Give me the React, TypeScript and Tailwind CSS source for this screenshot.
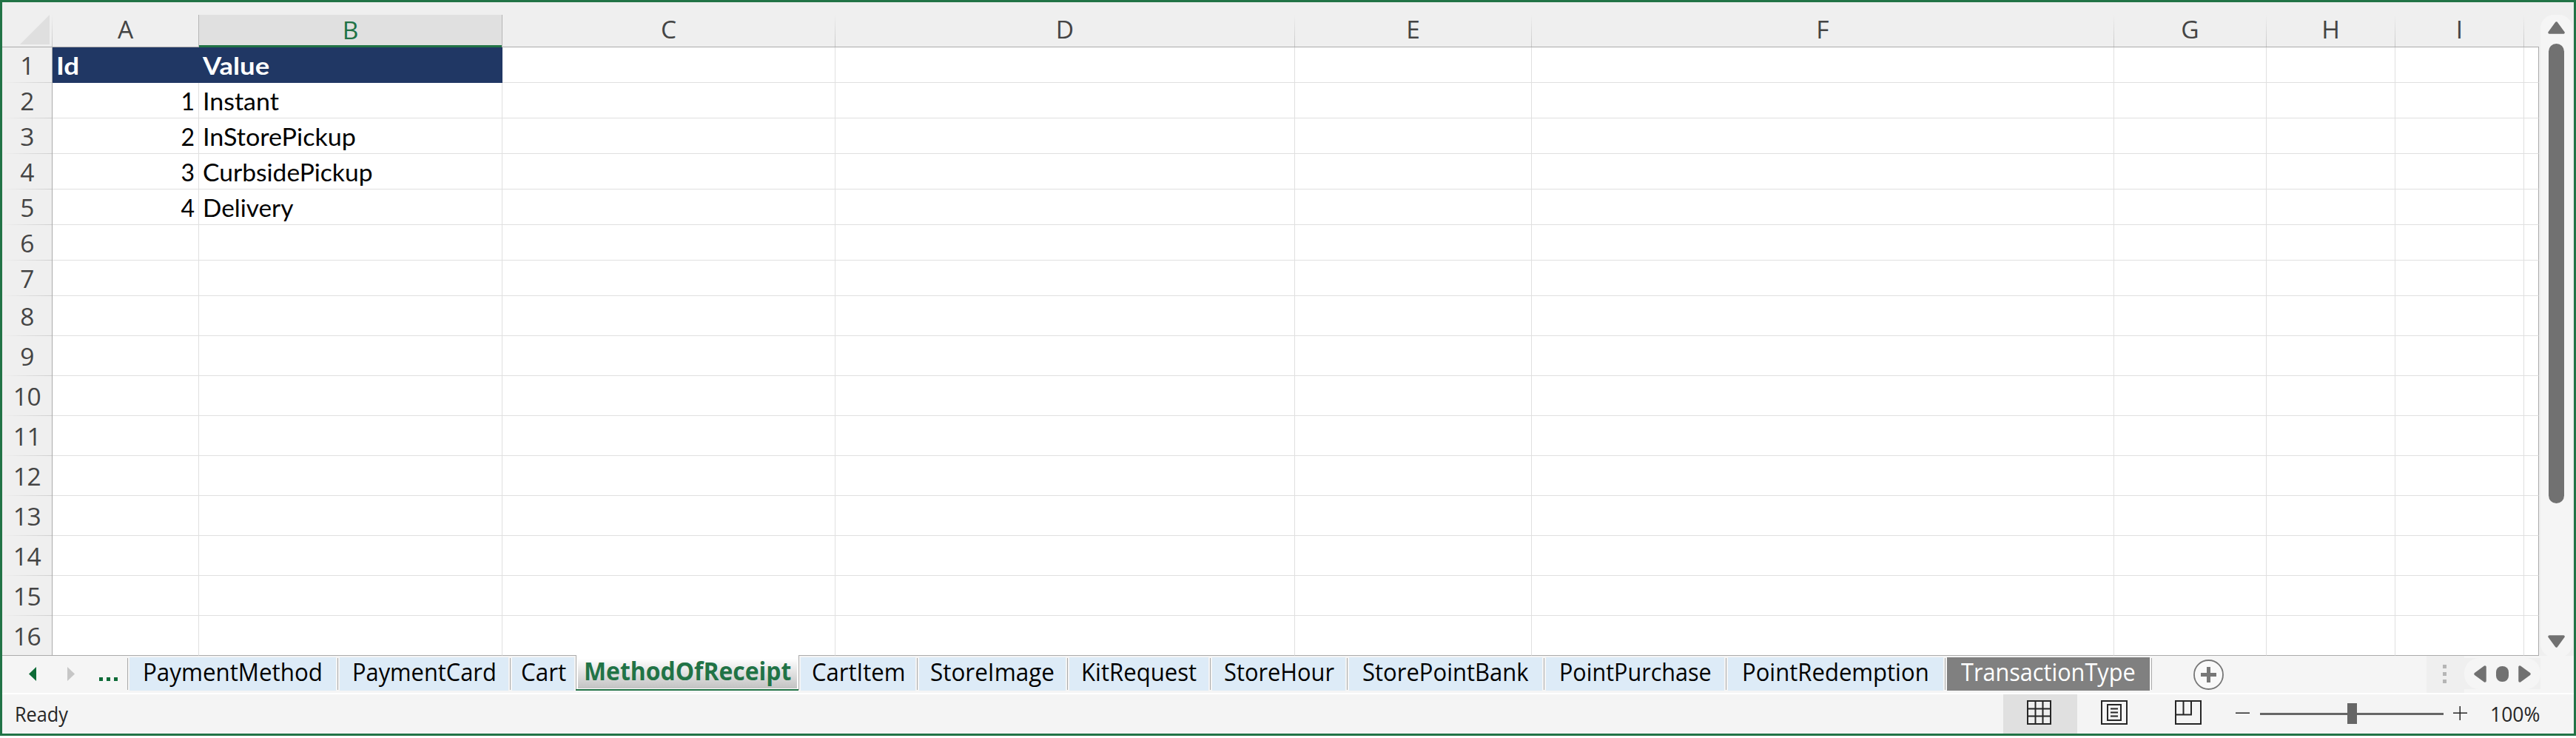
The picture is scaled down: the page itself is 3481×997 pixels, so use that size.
import { useLayoutEffect, useRef, useState } from "react";

/** Text squeezed or stretched horizontally to an exact advance width. */
function Fit({ text, width, className = "" }: { text: string; width: number; className?: string }) {
  const ref = useRef<HTMLSpanElement>(null);
  const [scale, setScale] = useState(1);
  useLayoutEffect(() => {
    if (ref.current) setScale(width / ref.current.offsetWidth);
  }, [text, width]);
  return (
    <span className="block shrink-0" style={{ width }}>
      <span
        ref={ref}
        className={`inline-block origin-left whitespace-nowrap ${className}`}
        style={{ transform: `scaleX(${scale})` }}
      >
        {text}
      </span>
    </span>
  );
}

const columns = [
  { name: "A", width: 198 },
  { name: "B", width: 410 },
  { name: "C", width: 450 },
  { name: "D", width: 621 },
  { name: "E", width: 320 },
  { name: "F", width: 787 },
  { name: "G", width: 206 },
  { name: "H", width: 174 },
  { name: "I", width: 174 },
];

const data: Record<number, { id: string; value: string; width: number }> = {
  2: { id: "1", value: "Instant", width: 103 },
  3: { id: "2", value: "InStorePickup", width: 207 },
  4: { id: "3", value: "CurbsidePickup", width: 230 },
  5: { id: "4", value: "Delivery", width: 122 },
};

const tabs = [
  { name: "PaymentMethod", width: 284, text: 243 },
  { name: "PaymentCard", width: 233, text: 195 },
  { name: "Cart", width: 89, text: 61 },
  { name: "MethodOfReceipt", width: 301, text: 280, active: true },
  { name: "CartItem", width: 160, text: 126 },
  { name: "StoreImage", width: 203, text: 168 },
  { name: "KitRequest", width: 193, text: 156 },
  { name: "StoreHour", width: 185, text: 149 },
  { name: "StorePointBank", width: 266, text: 225 },
  { name: "PointPurchase", width: 246, text: 206 },
  { name: "PointRedemption", width: 296, text: 253 },
  { name: "TransactionType", width: 279, text: 236, dark: true },
];

function ColumnHeaders() {
  return (
    <div className="flex h-[61px] w-full border-b border-[#ababab] bg-[#efefef] pt-[17px]">
      <div className="flex w-[68px] shrink-0">
        <svg className="h-[43px] w-[68px]" viewBox="0 0 68 43">
          <path d="M64 0V40H24Z" fill="#dfdfdf" />
          <rect x="67" y="0" width="1" height="43" fill="url(#fade)" />
          <defs>
            <linearGradient id="fade" x1="0" y1="0" x2="0" y2="1">
              <stop offset="0" stopColor="#efefef" />
              <stop offset="1" stopColor="#c6c6c6" />
            </linearGradient>
          </defs>
        </svg>
      </div>
      {columns.map((c) => {
        const selected = c.name === "B";
        return (
          <div key={c.name} className="flex h-[43px] shrink-0" style={{ width: c.width }}>
            <div
              className={
                selected
                  ? "-mb-px flex h-[44px] flex-1 items-center justify-center border-b-[3px] border-[#217346] bg-[#e0e0e0] pb-[2px] text-[#217346]"
                  : "flex flex-1 items-center justify-center pb-[5px] text-[#444444]"
              }
            >
              <span className="text-[33.5px] leading-[40px]">{c.name}</span>
            </div>
            <div
              className={
                selected || c.name === "A"
                  ? "w-px bg-[#b5b5b5]"
                  : "w-px bg-linear-to-b from-[#efefef] to-[#c6c6c6]"
              }
            />
          </div>
        );
      })}
    </div>
  );
}

function Row({ n }: { n: number }) {
  const tall = n >= 8;
  const header = n === 1;
  const last = n === 16;
  const item = data[n];
  const line = last ? "border-b-[#ababab]" : "border-b-[#e0e0e0]";
  return (
    <div className={`flex w-full shrink-0 ${tall ? "h-[54px]" : "h-[48px]"}`}>
      <div className="flex w-[68px] shrink-0 flex-col border-r border-[#ababab] bg-[#efefef]">
        <div className="flex flex-1 items-center justify-center font-['Open_Sans',sans-serif] text-[#444444]">
          <span className="text-[33.5px] leading-[40px] tracking-[-0.5px]">{n}</span>
        </div>
        <div
          className={last ? "h-px bg-[#ababab]" : "h-px bg-linear-to-r from-[#efefef] to-[#cfcfcf]"}
        />
      </div>
      {columns.map((c) => {
        const filled = header && (c.name === "A" || c.name === "B");
        return (
          <div
            key={c.name}
            className={
              filled
                ? "flex shrink-0 items-center bg-[#203764] pt-[2px] pl-[5px] text-white"
                : `flex shrink-0 items-center border-r border-b border-r-[#e0e0e0] pt-[2px] pl-[5px] text-black ${line}`
            }
            style={{ width: c.width }}
          >
            {header && c.name === "A" && (
              <Fit text="Id" width={31} className="text-[32px] leading-[40px] font-bold" />
            )}
            {header && c.name === "B" && (
              <Fit text="Value" width={90} className="text-[32px] leading-[40px] font-bold" />
            )}
            {item && c.name === "A" && (
              <span className="flex-1 pr-[5px] text-right text-[32px] leading-[40px]">{item.id}</span>
            )}
            {item && c.name === "B" && (
              <Fit text={item.value} width={item.width} className="text-[32px] leading-[40px]" />
            )}
          </div>
        );
      })}
      <div className={`w-[20px] shrink-0 border-r border-b border-r-[#ababab] ${line}`} />
    </div>
  );
}

function VerticalScroll() {
  return (
    <div className="flex h-[885px] w-[47px] shrink-0 flex-col bg-[#efefef] pt-[17px] pl-[2px]">
      <div className="flex h-[868px] w-[43px] flex-col items-center rounded-[18px] bg-[#f5f5f5] pt-[9px]">
        <svg className="h-[17px] w-[23px]" viewBox="0 0 23 17">
          <path d="M11.5 2L21 15H2Z" fill="#717171" stroke="#717171" strokeWidth="3.5" strokeLinejoin="round" />
        </svg>
        <div className="mt-[13px] h-[621px] w-[21px] rounded-full bg-[#717171]" />
        <svg className="mt-[178px] h-[17px] w-[23px]" viewBox="0 0 23 17">
          <path d="M11.5 15L21 2H2Z" fill="#717171" stroke="#717171" strokeWidth="3.5" strokeLinejoin="round" />
        </svg>
      </div>
    </div>
  );
}

function TabBar() {
  return (
    <div className="flex h-[50px] w-full shrink-0 bg-[#f5f5f5]">
      <svg className="h-[50px] w-[169px] shrink-0" viewBox="0 0 169 50">
        <path d="M36 24.5L46 15V34Z" fill="#0e6b37" />
        <path d="M98 24.5L88 15V34Z" fill="#c6c6c6" />
        <path d="M131 29h5v5h-5zM141 29h5v5h-5zM151 29h5v5h-5z" fill="#0e6b37" />
      </svg>
      {tabs.map((t) =>
        t.active ? (
          <div
            key={t.name}
            className="-mt-px flex h-[48px] shrink-0 flex-col border-b-2 border-b-[#217346] bg-white"
            style={{ width: t.width }}
          >
            <div className="flex h-[46px] border-l border-[#ababab] bg-white pr-[2px] pb-px pl-[2px]">
              <div className="flex flex-1 items-center justify-center bg-linear-to-b from-white from-10% to-[#c3c3c3] pb-[3px] text-[#217346]">
                <Fit text={t.name} width={t.text} className="text-[33.5px] leading-[40px] font-bold" />
              </div>
            </div>
          </div>
        ) : (
          <div key={t.name} className="flex h-[47px] shrink-0" style={{ width: t.width }}>
            <div
              className={
                t.name === "CartItem"
                  ? "-mt-px h-[47px] w-px bg-[#ababab]"
                  : "mt-[3px] h-[43px] w-px bg-[#ababab]"
              }
            />
            <div
              className={`mt-[2px] mr-[2px] ml-[2px] flex h-[45px] flex-1 items-center justify-center pb-[7px] ${
                t.dark ? "bg-[#808080] text-white" : "bg-[#ddebf7] text-black"
              }`}
            >
              <Fit text={t.name} width={t.text} className="text-[33.5px] leading-[38px]" />
            </div>
          </div>
        ),
      )}
      <div className="mt-[3px] h-[43px] w-px bg-[#ababab]" />
      <svg className="mt-[4px] ml-[56px] h-[42px] w-[42px] shrink-0" viewBox="0 0 42 42">
        <circle cx="20.5" cy="21.5" r="19.5" fill="#f9f9f9" stroke="#777" strokeWidth="1.8" />
        <path d="M18 11h5v8h8v5h-8v8h-5v-8h-8v-5h8z" fill="#777" />
      </svg>
      <div className="ml-auto flex h-[50px] w-[51px] shrink-0 bg-[#efefef]">
        <svg className="h-[50px] w-[51px]" viewBox="0 0 51 50">
          <path d="M22 12h5v5h-5zM22 22h5v5h-5zM22 32h5v5h-5z" fill="#b5b5b5" />
        </svg>
      </div>
      <div className="mt-[3px] mr-[45px] h-[42px] w-[103px] shrink-0 bg-[#efefef]">
        <div className="h-[42px] w-[103px] rounded-[20px] bg-[#f5f5f5]">
          <svg className="h-[42px] w-[103px]" viewBox="0 0 103 42">
            <g fill="#717171" stroke="#717171" strokeWidth="3.5" strokeLinejoin="round">
              <path d="M15 21.5L28 12V31Z" />
              <path d="M88 21.5L75 12V31Z" />
            </g>
            <rect x="43" y="11" width="17" height="21" rx="8" fill="#717171" />
          </svg>
        </div>
      </div>
    </div>
  );
}

function StatusBar() {
  return (
    <div className="flex h-[53px] w-full shrink-0 bg-[#f4f4f4] text-[#262626]">
      <div className="flex pt-[10px] pl-[17px]">
        <Fit text="Ready" width={72} className="text-[27px] leading-[34px]" />
      </div>
      <div className="ml-auto flex h-[53px] w-[100px] bg-[#e0e0e0]">
        <svg className="h-[53px] w-[100px]" viewBox="0 0 100 53" fill="none" stroke="#262626" strokeWidth="2">
          <rect x="33" y="9" width="31" height="31" fill="#efefef" />
          <path d="M43.5 9V40M53.5 9V40M33 19.5H64M33 29.5H64" />
        </svg>
      </div>
      <svg className="h-[53px] w-[100px]" viewBox="0 0 100 53" fill="none" stroke="#262626" strokeWidth="2">
        <rect x="33" y="9" width="34" height="31" />
        <rect x="41" y="14" width="18" height="21" />
        <path d="M45 19.5H55M45 24.5H55M45 29.5H55" />
      </svg>
      <svg className="h-[53px] w-[100px]" viewBox="0 0 100 53" fill="none" stroke="#262626" strokeWidth="2">
        <rect x="33" y="9" width="34" height="31" />
        <path d="M43.5 9V27M54 9V27.5H33" />
      </svg>
      <svg className="h-[53px] w-[356px]" viewBox="0 0 356 53">
        <rect x="14" y="24.5" width="19" height="1.5" fill="#262626" />
        <rect x="47" y="25" width="248" height="3" fill="#666666" />
        <rect x="165" y="12" width="13" height="28" fill="#666666" />
        <rect x="308" y="24.5" width="19" height="1.5" fill="#262626" />
        <rect x="316.5" y="16" width="1.5" height="19" fill="#262626" />
      </svg>
      <div className="flex w-[115px] pt-[10px] pl-[2px]">
        <Fit text="100%" width={67} className="text-[26.5px] leading-[34px]" />
      </div>
    </div>
  );
}

export default function App() {
  return (
    <div className="h-[997px] w-[3481px] overflow-hidden bg-white font-['Open_Sans','Noto_Sans',sans-serif]">
      <div className="flex h-[994px] w-[3481px] flex-col border-[3px] border-[#217346] bg-[#f5f5f5]">
        <div className="flex h-[883px] w-full shrink-0">
          <div className="flex w-[3428px] shrink-0 flex-col bg-white">
            <ColumnHeaders />
            <div className="flex flex-col font-[Lato,'Noto_Sans',sans-serif]">
              {Array.from({ length: 16 }, (_, i) => (
                <Row key={i} n={i + 1} />
              ))}
            </div>
          </div>
          <VerticalScroll />
        </div>
        <TabBar />
        <div className="h-[2px] w-full shrink-0 bg-white" />
        <StatusBar />
      </div>
    </div>
  );
}
